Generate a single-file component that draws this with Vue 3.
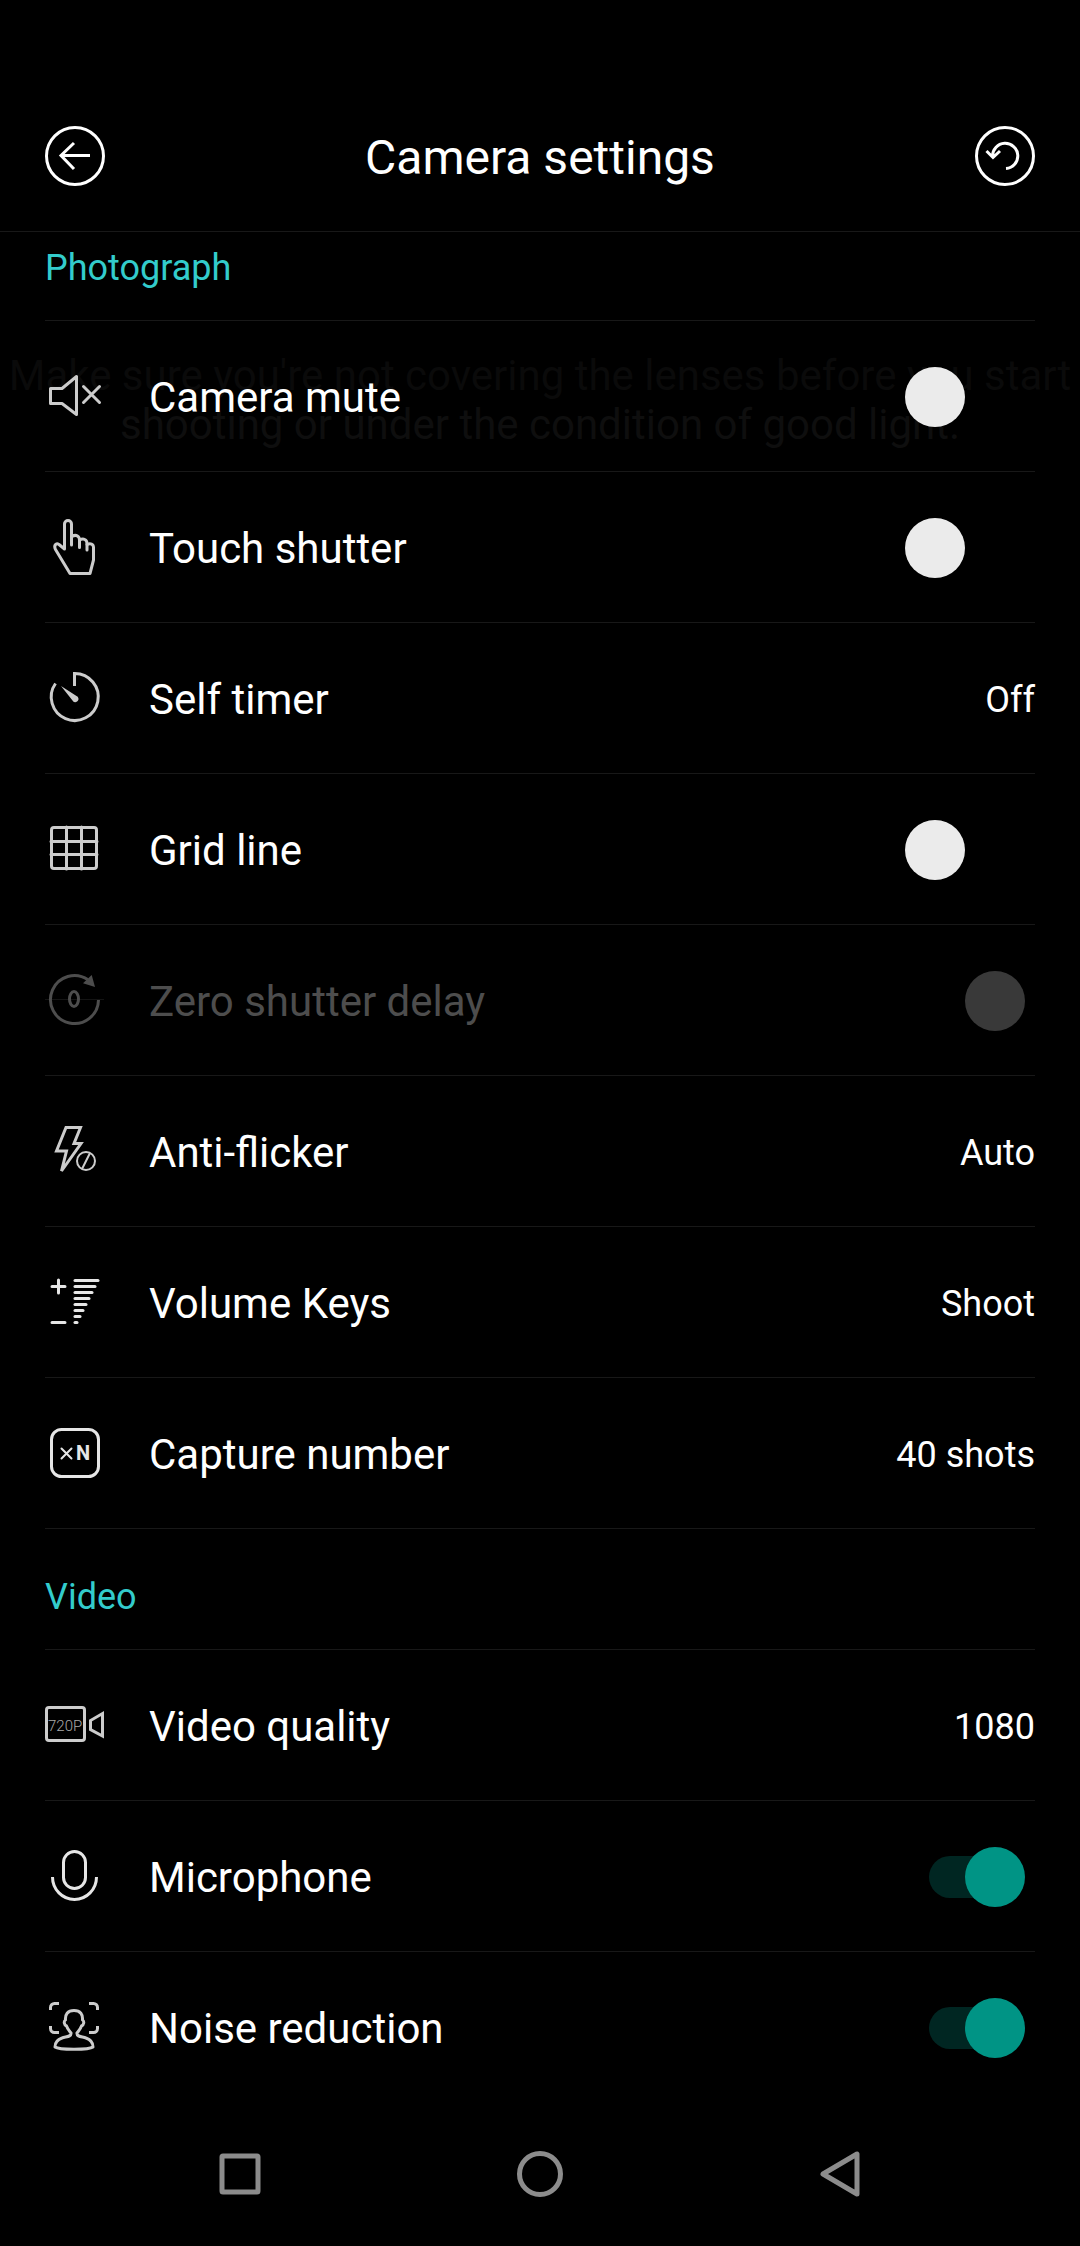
<script setup>
import { reactive } from 'vue'

const sections = reactive([
  {
    title: 'Photograph',
    rows: [
      { id: 'mute', label: 'Camera mute', toggle: true, on: false },
      { id: 'touch', label: 'Touch shutter', toggle: true, on: false },
      { id: 'timer', label: 'Self timer', value: 'Off' },
      { id: 'grid', label: 'Grid line', toggle: true, on: false },
      { id: 'zero', label: 'Zero shutter delay', toggle: true, on: true, disabled: true },
      { id: 'flicker', label: 'Anti-flicker', value: 'Auto' },
      { id: 'volume', label: 'Volume Keys', value: 'Shoot' },
      { id: 'capture', label: 'Capture number', value: '40 shots' }
    ]
  },
  {
    title: 'Video',
    rows: [
      { id: 'quality', label: 'Video quality', value: '1080' },
      { id: 'mic', label: 'Microphone', toggle: true, on: true },
      { id: 'noise', label: 'Noise reduction', toggle: true, on: true }
    ]
  }
])

const volumeBars = [54, 51, 48, 45, 42, 39, 36, 33]
</script>

<template>
  <div class="screen">
    <header class="topbar">
      <button class="round" type="button" aria-label="Back">
        <svg viewBox="0 0 60 60">
          <circle cx="30" cy="30" r="28.5" />
          <path d="M45 29.5H16M29 17L16 29.5L29 43" />
        </svg>
      </button>
      <h1>Camera settings</h1>
      <button class="round" type="button" aria-label="Reset">
        <svg viewBox="0 0 60 60">
          <circle cx="30" cy="30" r="28.5" />
          <path d="M31 42.5A12.6 12.6 0 1 0 17.6 30.5M11.5 25L18 31.5L25 25" />
        </svg>
      </button>
    </header>

    <main class="list">
      <p class="hint">
        <span>Make sure you're not covering the lenses before you start</span>
        <span class="hint-strong">shooting or under the condition of good light.</span>
      </p>

      <section v-for="section in sections" :key="section.title" class="section">
        <h2>{{ section.title }}</h2>
        <component
          :is="row.toggle ? 'label' : 'button'"
          v-for="row in section.rows"
          :key="row.id"
          class="row"
          :class="{ disabled: row.disabled }"
          :type="row.toggle ? null : 'button'"
        >
          <svg class="icon" :class="row.id" viewBox="0 0 60 60" aria-hidden="true">
            <template v-if="row.id === 'mute'">
              <path d="M5.5 22.5H17L31.5 10.5V48.5L17 37.5H5.5Z" />
              <path d="M38.5 20.5L54.500 36.500M54.500 20.500L38.500 36.500" />
            </template>
            <template v-else-if="row.id === 'touch'">
              <path d="M26.5 28V7a3.5 3.5 0 0 0-7 0V32L14 27.5C11 25.5 8.5 28.5 10.5 32.5L25 56.5H45L48.5 43V30.5C48.5 27 45.5 26 42 27.5" />
              <path d="M27 19.5C31 17 34.5 19 34.5 23V30.5M34.5 23C38.5 21 42 22.5 42 26.5V33" />
            </template>
            <template v-else-if="row.id === 'timer'">
              <path d="M29.5 18V5.5A23.5 23.5 0 1 1 10.5 15.5" />
              <path class="solid" d="M16 18L31.5 28A3.2 3.2 0 1 1 27.5 32.5Z" />
            </template>
            <template v-else-if="row.id === 'grid'">
              <rect x="6.5" y="8.5" width="45" height="41" rx="2.5" />
              <path d="M21.5 8V50M36.5 8V50M6 22.5H52M6 35.5H52" />
            </template>
            <template v-else-if="row.id === 'zero'">
              <path class="faint" d="M0 29.5H59" />
              <path d="M53.5 30A24 24 0 1 1 43 9.7" />
              <path class="solid" d="M46.7 5L50 17L38 13.3Z" />
              <ellipse cx="29" cy="29" rx="4.5" ry="7.5" />
            </template>
            <template v-else-if="row.id === 'flicker'">
              <path class="sharp" d="M21 6.5H35.5L29 22.5H36L16.500 50L21.5 30H11.5Z" />
              <circle class="knockout" cx="41" cy="40" r="9" />
              <path class="thin" d="M37.5 47L44.5 33" />
            </template>
            <template v-else-if="row.id === 'volume'">
              <path d="M7 14.5H20M13.5 8V21M7 50.5H20" />
              <path v-for="(end, i) in volumeBars" :key="end" :d="`M30 ${8.5 + i * 6}H${end - 1}`" />
            </template>
            <template v-else-if="row.id === 'capture'">
              <rect x="6.5" y="6.5" width="47" height="47" rx="10" />
              <path class="thin" d="M16.5 25.5L26.5 35.5M26.5 25.5L16.5 35.5" />
              <text class="count" x="31" y="37">N</text>
            </template>
            <template v-else-if="row.id === 'quality'">
              <rect x="1.5" y="12.5" width="38" height="33" rx="2.5" />
              <path class="sharp" d="M57.5 18.500V41L45.500 34.500V25.500Z" />
              <text class="res" x="3" y="36">720P</text>
            </template>
            <template v-else-if="row.id === 'mic'">
              <rect x="18.5" y="5.5" width="22" height="37" rx="11" />
              <path class="sharp" d="M7.5 31a22 22.5 0 0 0 44 0" />
            </template>
            <template v-else>
              <path class="sharp" d="M5.5 13V10.5a4 4 0 0 1 4-4H14M44 6.5H48.5a4 4 0 0 1 4 4V13M5.5 29V31.5a4 4 0 0 0 4 4H14M44 35.5H48.5a4 4 0 0 0 4-4V29" />
              <path d="M29 13.5C22.5 13.5 20 17.5 20.5 23C18.5 24 19 28 21.5 29C22.5 32 24.5 34 26 36C26.5 40 21 39.5 17 41C12.5 42.5 10 45 10 50C14 53 44 53 48 50C48 45 45.5 42.5 41 41C37 39.5 31.5 40 32 36C33.5 34 35.5 32 36.5 29C39 28 39.5 24 37.5 23C38 17.5 35.5 13.5 29 13.5Z" />
            </template>
          </svg>
          <span class="label">{{ row.label }}</span>
          <input
            v-if="row.toggle"
            v-model="row.on"
            class="switch"
            type="checkbox"
            role="switch"
            :disabled="row.disabled"
          />
          <span v-else class="value">{{ row.value }}</span>
        </component>
      </section>
    </main>

    <nav class="navbar" aria-label="System navigation">
      <button type="button" aria-label="Recent apps">
        <svg viewBox="0 0 48 48"><rect x="6" y="6" width="36" height="36" rx="1" /></svg>
      </button>
      <button type="button" aria-label="Home">
        <svg viewBox="0 0 48 48"><circle cx="24" cy="24" r="20.5" /></svg>
      </button>
      <button type="button" aria-label="Back">
        <svg viewBox="0 0 48 48"><path d="M41 4V44L7 24Z" /></svg>
      </button>
    </nav>
  </div>
</template>

<style>
html,
body {
  background: #000;
}
body {
  margin: 0;
}
</style>

<style scoped>
.screen {
  display: flex;
  flex-direction: column;
  min-height: 100vh;
  background: #000;
  color: #fff;
  font-family: Roboto, sans-serif;
}
button {
  padding: 0;
  border: 0;
  background: none;
  color: inherit;
  font: inherit;
  text-align: left;
}
svg {
  display: block;
  fill: none;
  stroke: currentColor;
  stroke-width: 3;
}
.topbar {
  display: flex;
  align-items: center;
  justify-content: space-between;
  height: 150px;
  padding: 81px 45px 0;
  border-bottom: 1px solid #181818;
}
.round,
.round svg {
  width: 60px;
  height: 60px;
}
h1 {
  margin: 0;
  padding-top: 4px;
  font-size: 48px;
  line-height: 56px;
  font-weight: 400;
}
.list {
  position: relative;
  z-index: 0;
  flex: 1;
  padding: 0 45px;
}
.hint {
  position: absolute;
  z-index: -1;
  top: 119px;
  left: 0;
  right: 0;
  margin: 0;
  color: #0a0a0a;
  font-size: 42px;
  line-height: 49px;
  text-align: center;
}
.hint span {
  display: block;
}
.hint .hint-strong {
  color: #0e0e0e;
}
.section + .section {
  margin-top: 32px;
}
h2 {
  margin: 0;
  padding-bottom: 16px;
  border-bottom: 1px solid #181818;
  color: #33cccc;
  font-size: 36px;
  line-height: 72px;
  font-weight: 400;
}
.row {
  display: flex;
  align-items: center;
  width: 100%;
  height: 150px;
  border-bottom: 1px solid #181818;
  box-sizing: content-box;
}
.section:last-child .row:last-child {
  border-bottom: 0;
}
.icon {
  width: 60px;
  height: 60px;
  color: #ccc;
  stroke-linecap: round;
  stroke-linejoin: round;
}
.timer,
.sharp {
  stroke-linecap: butt;
  stroke-linejoin: miter;
}
.volume,
.capture,
.mic {
  color: #e6e6e6;
}
.zero {
  color: #4d4d4d;
  stroke-linecap: butt;
}
.solid {
  fill: currentColor;
  stroke: none;
}
.faint {
  stroke: #141414;
  stroke-width: 1;
}
.thin {
  stroke-width: 2;
}
.knockout {
  fill: #000;
  stroke-width: 2;
}
.count,
.res {
  fill: currentColor;
  stroke: none;
}
.count {
  font-size: 20px;
  font-weight: 700;
}
.res {
  fill: #aaa;
  font-size: 15px;
  font-weight: 300;
}
.label {
  flex: 1;
  padding: 3px 0 0 44px;
  font-size: 42px;
  line-height: 50px;
}
.value {
  padding-top: 3px;
  font-size: 36px;
  line-height: 42px;
}
.disabled .label {
  color: #4d4d4d;
}
.switch {
  position: relative;
  width: 120px;
  height: 60px;
  margin: 1px 10px 0 0;
  appearance: none;
}
.switch::before {
  content: '';
  position: absolute;
  inset: 9px 24px;
  border-radius: 21px;
}
.switch::after {
  content: '';
  position: absolute;
  top: 0;
  left: 0;
  width: 60px;
  height: 60px;
  border-radius: 50%;
  background: #ebebeb;
}
.switch:checked::before {
  background: #002622;
}
.switch:checked::after {
  left: auto;
  right: 0;
  background: #009485;
}
.switch:disabled::before {
  background: none;
}
.switch:disabled::after {
  background: #393939;
}
.navbar {
  display: flex;
  height: 144px;
  padding: 0 90px;
}
.navbar button {
  flex: 1;
  display: flex;
  align-items: center;
  justify-content: center;
  color: #8c8c8c;
}
.navbar svg {
  width: 48px;
  height: 48px;
  stroke-width: 5;
  stroke-linejoin: round;
}
</style>
